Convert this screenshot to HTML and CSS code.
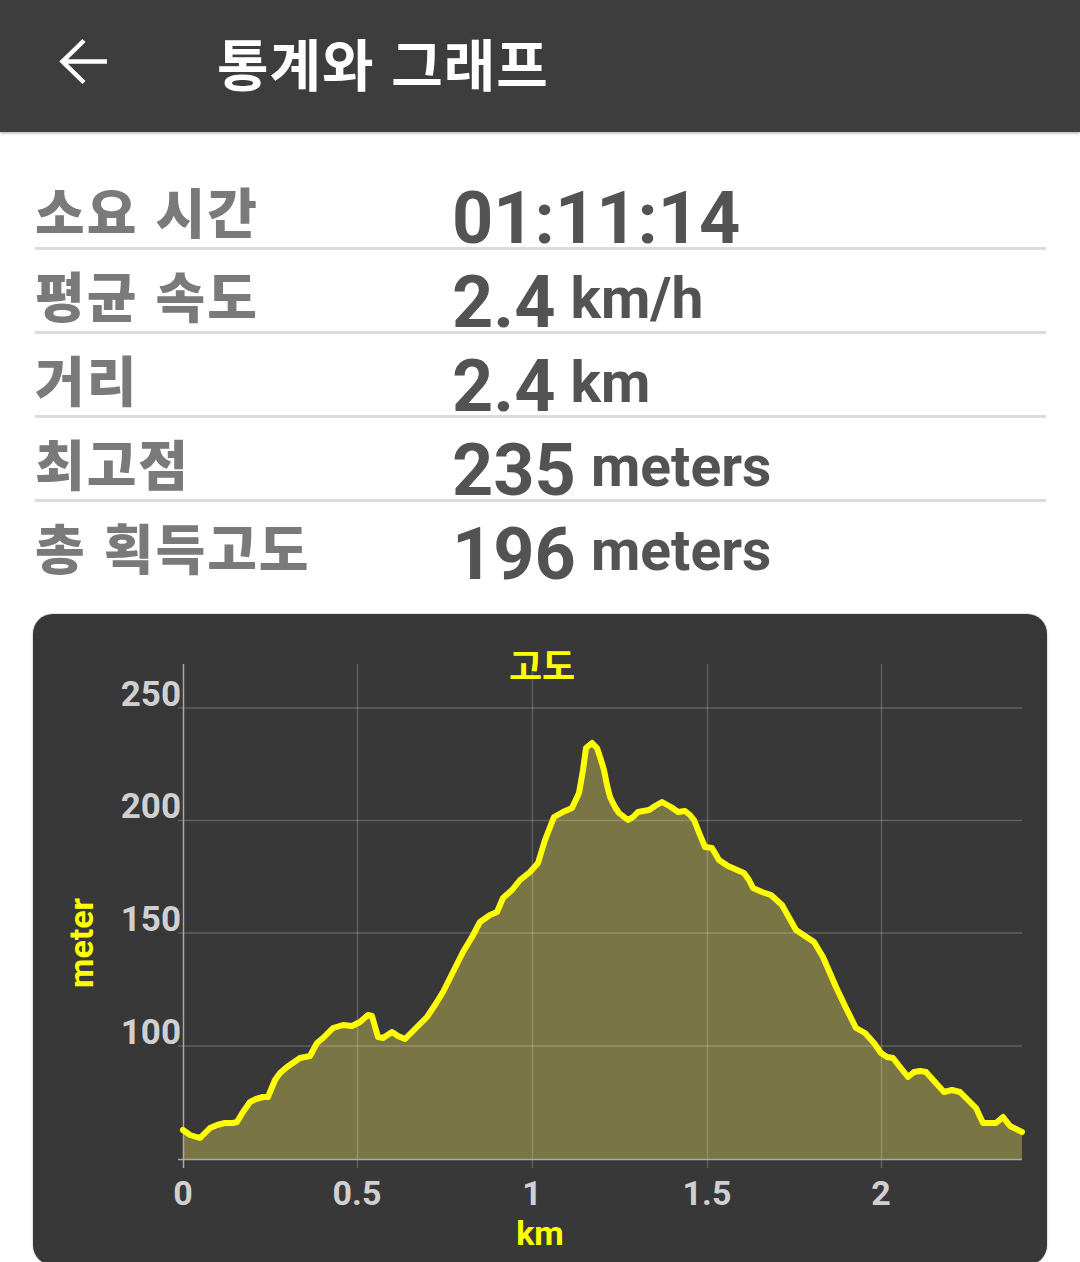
FILE: index.html
```html
<!DOCTYPE html>
<html lang="ko">
<head>
<meta charset="utf-8">
<title>통계와 그래프</title>
<link rel="stylesheet" href="styles.css">
</head>
<body>
<header class="appbar">
  <svg class="back" width="50" height="50" viewBox="0 0 50 50" aria-hidden="true">
    <path d="M48 24.5H4 M25 3.5L3.5 24.5L25 45.5" fill="none" stroke="#fff" stroke-width="4.5"/>
  </svg>
  <h1 class="title">통계와 그래프</h1>
</header>

<main>
  <section class="stats">
    <div class="row">
      <div class="label">소요 시간</div>
      <div class="value"><span class="num">01:11:14</span></div>
    </div>
    <div class="row">
      <div class="label">평균 속도</div>
      <div class="value"><span class="num">2.4</span><span class="unit">km/h</span></div>
    </div>
    <div class="row">
      <div class="label">거리</div>
      <div class="value"><span class="num">2.4</span><span class="unit">km</span></div>
    </div>
    <div class="row">
      <div class="label">최고점</div>
      <div class="value"><span class="num">235</span><span class="unit">meters</span></div>
    </div>
    <div class="row last">
      <div class="label">총 획득고도</div>
      <div class="value"><span class="num">196</span><span class="unit">meters</span></div>
    </div>
  </section>

  <section class="card">
    <svg class="chart" width="1014" height="651" viewBox="33 614 1014 651">
      <polygon class="area" points="183,1159 183,1130 190,1135 200,1138 205,1133 210,1128 217,1125 225,1123 233,1123 237,1122 243,1112 250,1102 256,1099 263,1097 268,1097 275,1080 280,1073 287,1067 300,1058 310,1056 317,1043 323,1038 333,1028 343,1025 352,1026 360,1022 368,1015 372,1016 378,1037 383,1038 392,1032 398,1036 405,1039 417,1027 427,1017 435,1005 443,992 453,972 463,952 472,937 480,922 490,915 497,912 503,898 512,890 520,880 530,872 538,863 545,840 554,817 563,812 572,808 579,793 583,770 586,748 592,743 597,748 601,760 604,770 607,785 610,797 615,807 619,813 628,820 633,817 638,812 649,810 655,806 662,802 671,807 678,812 685,811 690,815 694,820 700,835 705,847 712,848 719,860 728,866 744,873 749,880 753,888 762,892 771,895 782,905 796,930 805,936 814,942 823,957 836,987 846,1008 856,1028 865,1033 874,1043 881,1053 887,1057 893,1058 900,1067 908,1077 914,1072 920,1071 926,1072 935,1082 944,1092 952,1090 960,1092 968,1100 976,1108 983,1123 996,1123 1003,1117 1010,1126 1022,1132 1022,1159"/>
      <g class="grid">
        <line x1="178" y1="708" x2="1022" y2="708"/>
        <line x1="178" y1="820.5" x2="1022" y2="820.5"/>
        <line x1="178" y1="933" x2="1022" y2="933"/>
        <line x1="178" y1="1046" x2="1022" y2="1046"/>
        <line x1="357.5" y1="664" x2="357.5" y2="1168"/>
        <line x1="532.5" y1="664" x2="532.5" y2="1168"/>
        <line x1="707.5" y1="664" x2="707.5" y2="1168"/>
        <line x1="881.5" y1="664" x2="881.5" y2="1168"/>
      </g>
      <g class="axis">
        <line x1="183.5" y1="664" x2="183.5" y2="1168"/>
        <line x1="178" y1="1159.5" x2="1022" y2="1159.5"/>
      </g>
      <polyline class="curve" points="183,1130 190,1135 200,1138 205,1133 210,1128 217,1125 225,1123 233,1123 237,1122 243,1112 250,1102 256,1099 263,1097 268,1097 275,1080 280,1073 287,1067 300,1058 310,1056 317,1043 323,1038 333,1028 343,1025 352,1026 360,1022 368,1015 372,1016 378,1037 383,1038 392,1032 398,1036 405,1039 417,1027 427,1017 435,1005 443,992 453,972 463,952 472,937 480,922 490,915 497,912 503,898 512,890 520,880 530,872 538,863 545,840 554,817 563,812 572,808 579,793 583,770 586,748 592,743 597,748 601,760 604,770 607,785 610,797 615,807 619,813 628,820 633,817 638,812 649,810 655,806 662,802 671,807 678,812 685,811 690,815 694,820 700,835 705,847 712,848 719,860 728,866 744,873 749,880 753,888 762,892 771,895 782,905 796,930 805,936 814,942 823,957 836,987 846,1008 856,1028 865,1033 874,1043 881,1053 887,1057 893,1058 900,1067 908,1077 914,1072 920,1071 926,1072 935,1082 944,1092 952,1090 960,1092 968,1100 976,1108 983,1123 996,1123 1003,1117 1010,1126 1022,1132"/>
      <text class="ctitle" x="542" y="680">고도</text>
      <g class="ylab">
        <text x="181" y="706">250</text>
        <text x="181" y="818">200</text>
        <text x="181" y="931">150</text>
        <text x="181" y="1044">100</text>
      </g>
      <g class="xlab">
        <text x="183" y="1205">0</text>
        <text x="357" y="1205">0.5</text>
        <text x="532" y="1205">1</text>
        <text x="707" y="1205">1.5</text>
        <text x="881" y="1205">2</text>
      </g>
      <text class="axtitle" x="540" y="1245">km</text>
      <text class="axtitle" transform="translate(93 943) rotate(-90)">meter</text>
    </svg>
  </section>
</main>
</body>
</html>
```

FILE: styles.css
```css
html, body {
  margin: 0;
  padding: 0;
  background: #ffffff;
}

body {
  font-family: "Noto Sans CJK KR", "Noto Sans", sans-serif;
  width: 1080px;
  overflow: hidden;
}

.appbar {
  height: 132px;
  background: #3d3d3d;
  display: flex;
  align-items: center;
  box-shadow: 0 1px 3px rgba(0, 0, 0, 0.35);
  position: relative;
  z-index: 1;
}

.back {
  margin-left: 59px;
  margin-bottom: 9px;
  flex: none;
}

.title {
  margin: 0 0 8px 108px;
  font-family: "Noto Sans CJK KR", sans-serif;
  font-weight: 700;
  font-size: 56px;
  line-height: 56px;
  color: #ffffff;
  letter-spacing: 1px;
}

.stats {
  padding: 34px 34px 0 35px;
}

.row {
  display: flex;
  align-items: flex-start;
  height: 84px;
  box-sizing: border-box;
  border-bottom: 3px solid #dcdcdc;
}

.row.last {
  border-bottom: none;
}

.label {
  width: 417px;
  flex: none;
  padding-top: 18px;
  font-family: "Noto Sans CJK KR", sans-serif;
  font-weight: 900;
  font-size: 54px;
  line-height: 54px;
  color: #7a7a7a;
  letter-spacing: 2px;
  white-space: nowrap;
}

.value {
  display: flex;
  align-items: flex-start;
  font-family: Roboto, "Noto Sans", sans-serif;
  font-weight: 700;
  color: #535353;
  white-space: nowrap;
}

.num {
  font-size: 72px;
  line-height: 72px;
  margin-top: 17px;
}

.unit {
  font-size: 57px;
  line-height: 57px;
  margin-top: 20px;
  margin-left: 15px;
}

.card {
  margin: 28px 0 0 33px;
  width: 1014px;
  height: 651px;
  background: #383838;
  border-radius: 20px;
  box-shadow: 0 0 2px rgba(0, 0, 0, 0.4);
  overflow: hidden;
}

.chart {
  display: block;
}

.area {
  fill: #7a7545;
}

.grid line {
  stroke: rgba(255, 255, 255, 0.2);
  stroke-width: 1.5;
}

.axis line {
  stroke: #a8a8a8;
  stroke-width: 1.5;
}

.curve {
  fill: none;
  stroke: #ffff00;
  stroke-width: 6;
  stroke-linejoin: round;
  stroke-linecap: round;
}

.ctitle {
  font-family: "Noto Sans CJK KR", sans-serif;
  font-weight: 700;
  font-size: 36px;
  fill: #ffff00;
  text-anchor: middle;
}

.ylab text {
  font-family: Roboto, sans-serif;
  font-weight: 700;
  font-size: 35px;
  fill: #d0d0d0;
  text-anchor: end;
}

.xlab text {
  font-family: Roboto, sans-serif;
  font-weight: 700;
  font-size: 34px;
  fill: #d0d0d0;
  text-anchor: middle;
}

.axtitle {
  font-family: Roboto, sans-serif;
  font-weight: 700;
  font-size: 34px;
  fill: #ffff00;
  text-anchor: middle;
}
```
